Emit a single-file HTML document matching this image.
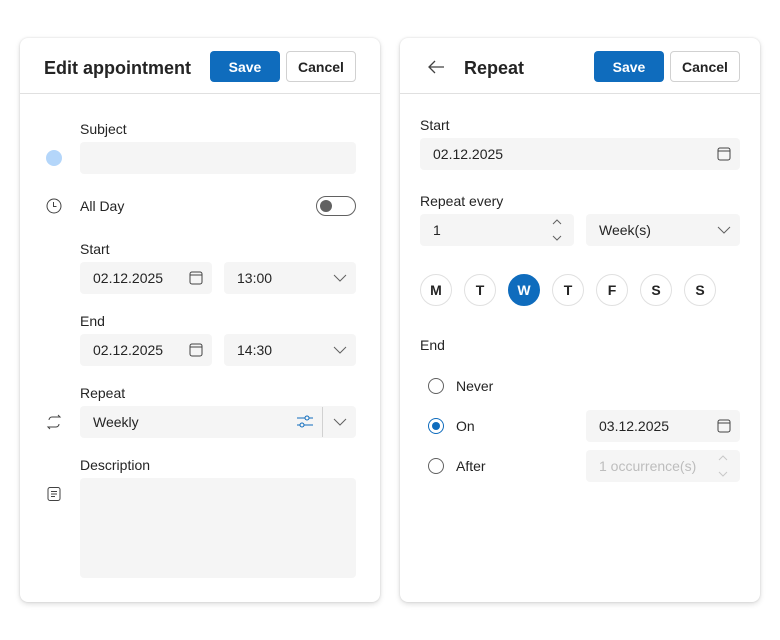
<!DOCTYPE html>
<html><head><style>
*{box-sizing:border-box;margin:0;padding:0}
body{width:780px;height:640px;background:#fff;font-family:"Liberation Sans",sans-serif;color:#242424;position:relative;overflow:hidden;font-size:14px}
.card{position:absolute;top:38px;width:360px;height:564px;background:#fff;border-radius:8px;box-shadow:0 2px 6px rgba(0,0,0,.14),0 0 2px rgba(0,0,0,.12)}
.a{position:absolute}
.title{font-size:18px;font-weight:bold;top:58px}
.btn{position:absolute;top:51px;height:31px;border-radius:4px;font-size:14px;font-weight:bold;display:flex;align-items:center;justify-content:center}
.save{background:#0f6cbd;color:#fff;width:70px}
.cancel{background:#fff;border:1px solid #d1d1d1;width:70px;color:#242424}
.hr{position:absolute;top:93px;height:1px;background:#e0e0e0;width:360px}
.lbl{position:absolute;font-size:14px}
.inp{position:absolute;background:#f5f5f5;border-radius:4px;height:32px;display:flex;align-items:center;padding-left:13px;font-size:14px}
.day{position:absolute;top:274px;width:32px;height:32px;border-radius:50%;border:1px solid #e0e0e0;display:flex;align-items:center;justify-content:center;font-weight:bold;font-size:14px}
.radio{position:absolute;left:428px;width:16px;height:16px;border-radius:50%;border:1px solid #616161}
svg{position:absolute}
</style></head><body>
<div class="card" style="left:20px"></div>
<div class="card" style="left:400px"></div>

<div class="a title" style="left:44px">Edit appointment</div>
<div class="btn save" style="left:210px">Save</div>
<div class="btn cancel" style="left:286px">Cancel</div>
<div class="hr" style="left:20px"></div>

<div class="lbl" style="left:80px;top:121px">Subject</div>
<div class="inp" style="left:80px;top:142px;width:276px"></div>
<div class="a" style="left:46px;top:150px;width:16px;height:16px;border-radius:50%;background:#b4d6fa"></div>

<svg style="left:46px;top:198px" width="16" height="16" viewBox="0 0 16 16"><circle cx="8" cy="8" r="7" fill="none" stroke="#424242"/><path d="M7.5 4v4.5h3" fill="none" stroke="#424242"/></svg>
<div class="lbl" style="left:80px;top:198px">All Day</div>
<div class="a" style="left:316px;top:196px;width:40px;height:20px;border-radius:10px;border:1px solid #616161"></div>
<div class="a" style="left:320px;top:200px;width:12px;height:12px;border-radius:50%;background:#616161"></div>

<div class="lbl" style="left:80px;top:241px">Start</div>
<div class="inp" style="left:80px;top:262px;width:132px">02.12.2025</div>
<div class="inp" style="left:224px;top:262px;width:132px">13:00</div>
<div class="lbl" style="left:80px;top:313px">End</div>
<div class="inp" style="left:80px;top:334px;width:132px">02.12.2025</div>
<div class="inp" style="left:224px;top:334px;width:132px">14:30</div>
<svg style="left:188px;top:270px" width="16" height="16" viewBox="0 0 16 16"><rect x="2" y="2" width="12" height="12" rx="2" fill="none" stroke="#424242"/><path d="M2 5h12" stroke="#424242"/></svg>
<svg style="left:188px;top:342px" width="16" height="16" viewBox="0 0 16 16"><rect x="2" y="2" width="12" height="12" rx="2" fill="none" stroke="#424242"/><path d="M2 5h12" stroke="#424242"/></svg>
<svg style="left:332px;top:272px" width="16" height="12" viewBox="0 0 16 12"><path d="M2 3l6 6 6-6" fill="none" stroke="#616161"/></svg>
<svg style="left:332px;top:344px" width="16" height="12" viewBox="0 0 16 12"><path d="M2 3l6 6 6-6" fill="none" stroke="#616161"/></svg>

<div class="lbl" style="left:80px;top:385px">Repeat</div>
<div class="inp" style="left:80px;top:406px;width:276px">Weekly</div>
<div class="a" style="left:322px;top:407px;width:1px;height:30px;background:#d1d1d1"></div>
<svg style="left:296px;top:414px" width="18" height="16" viewBox="0 0 18 16"><path d="M1 4h16M1 11h16" stroke="#0f6cbd"/><circle cx="11" cy="4" r="2" fill="#f5f5f5" stroke="#0f6cbd"/><circle cx="6" cy="11" r="2" fill="#f5f5f5" stroke="#0f6cbd"/></svg>
<svg style="left:332px;top:416px" width="16" height="12" viewBox="0 0 16 12"><path d="M2 3l6 6 6-6" fill="none" stroke="#616161"/></svg>
<svg style="left:45px;top:414px" width="18" height="16" viewBox="0 0 18 16"><path d="M4 6a3 3 0 0 1 3-3h8l-2-2M14 10a3 3 0 0 1-3 3H3l2 2" fill="none" stroke="#424242"/></svg>

<div class="lbl" style="left:80px;top:457px">Description</div>
<div class="inp" style="left:80px;top:478px;width:276px;height:100px"></div>
<svg style="left:46px;top:486px" width="16" height="16" viewBox="0 0 16 16"><rect x="2" y="1.5" width="12" height="13" rx="2" fill="none" stroke="#424242"/><path d="M5 5.5h6M5 8h6M5 10.5h4" stroke="#424242"/></svg>

<!-- right -->
<svg style="left:426px;top:58px" width="20" height="18" viewBox="0 0 20 18"><path d="M18 9H3M9 3L3 9l6 6" fill="none" stroke="#424242" stroke-width="1.3"/></svg>
<div class="a title" style="left:464px">Repeat</div>
<div class="btn save" style="left:594px">Save</div>
<div class="btn cancel" style="left:670px">Cancel</div>
<div class="hr" style="left:400px"></div>

<div class="lbl" style="left:420px;top:117px">Start</div>
<div class="inp" style="left:420px;top:138px;width:320px">02.12.2025</div>
<svg style="left:716px;top:146px" width="16" height="16" viewBox="0 0 16 16"><rect x="2" y="2" width="12" height="12" rx="2" fill="none" stroke="#424242"/><path d="M2 5h12" stroke="#424242"/></svg>

<div class="lbl" style="left:420px;top:193px">Repeat every</div>
<div class="inp" style="left:420px;top:214px;width:154px">1</div>
<svg style="left:551px;top:217px" width="12" height="26" viewBox="0 0 12 26"><path d="M2 7l4-4 4 4M2 19l4 4 4-4" fill="none" stroke="#616161"/></svg>
<div class="inp" style="left:586px;top:214px;width:154px">Week(s)</div>
<svg style="left:716px;top:224px" width="16" height="12" viewBox="0 0 16 12"><path d="M2 3l6 6 6-6" fill="none" stroke="#616161"/></svg>

<div class="day" style="left:420px">M</div>
<div class="day" style="left:464px">T</div>
<div class="day" style="left:508px;background:#0f6cbd;border-color:#0f6cbd;color:#fff">W</div>
<div class="day" style="left:552px">T</div>
<div class="day" style="left:596px">F</div>
<div class="day" style="left:640px">S</div>
<div class="day" style="left:684px">S</div>

<div class="lbl" style="left:420px;top:337px">End</div>
<div class="radio" style="top:378px"></div>
<div class="lbl" style="left:456px;top:378px">Never</div>
<div class="radio" style="top:418px;border-color:#0f6cbd"></div>
<div class="a" style="left:432px;top:422px;width:8px;height:8px;border-radius:50%;background:#0f6cbd"></div>
<div class="lbl" style="left:456px;top:418px">On</div>
<div class="radio" style="top:458px"></div>
<div class="lbl" style="left:456px;top:458px">After</div>
<div class="inp" style="left:586px;top:410px;width:154px">03.12.2025</div>
<svg style="left:716px;top:418px" width="16" height="16" viewBox="0 0 16 16"><rect x="2" y="2" width="12" height="12" rx="2" fill="none" stroke="#424242"/><path d="M2 5h12" stroke="#424242"/></svg>
<div class="inp" style="left:586px;top:450px;width:154px;color:#bdbdbd">1 occurrence(s)</div>
<svg style="left:717px;top:453px" width="12" height="26" viewBox="0 0 12 26"><path d="M2 7l4-4 4 4M2 19l4 4 4-4" fill="none" stroke="#c8c8c8"/></svg>
</body></html>
